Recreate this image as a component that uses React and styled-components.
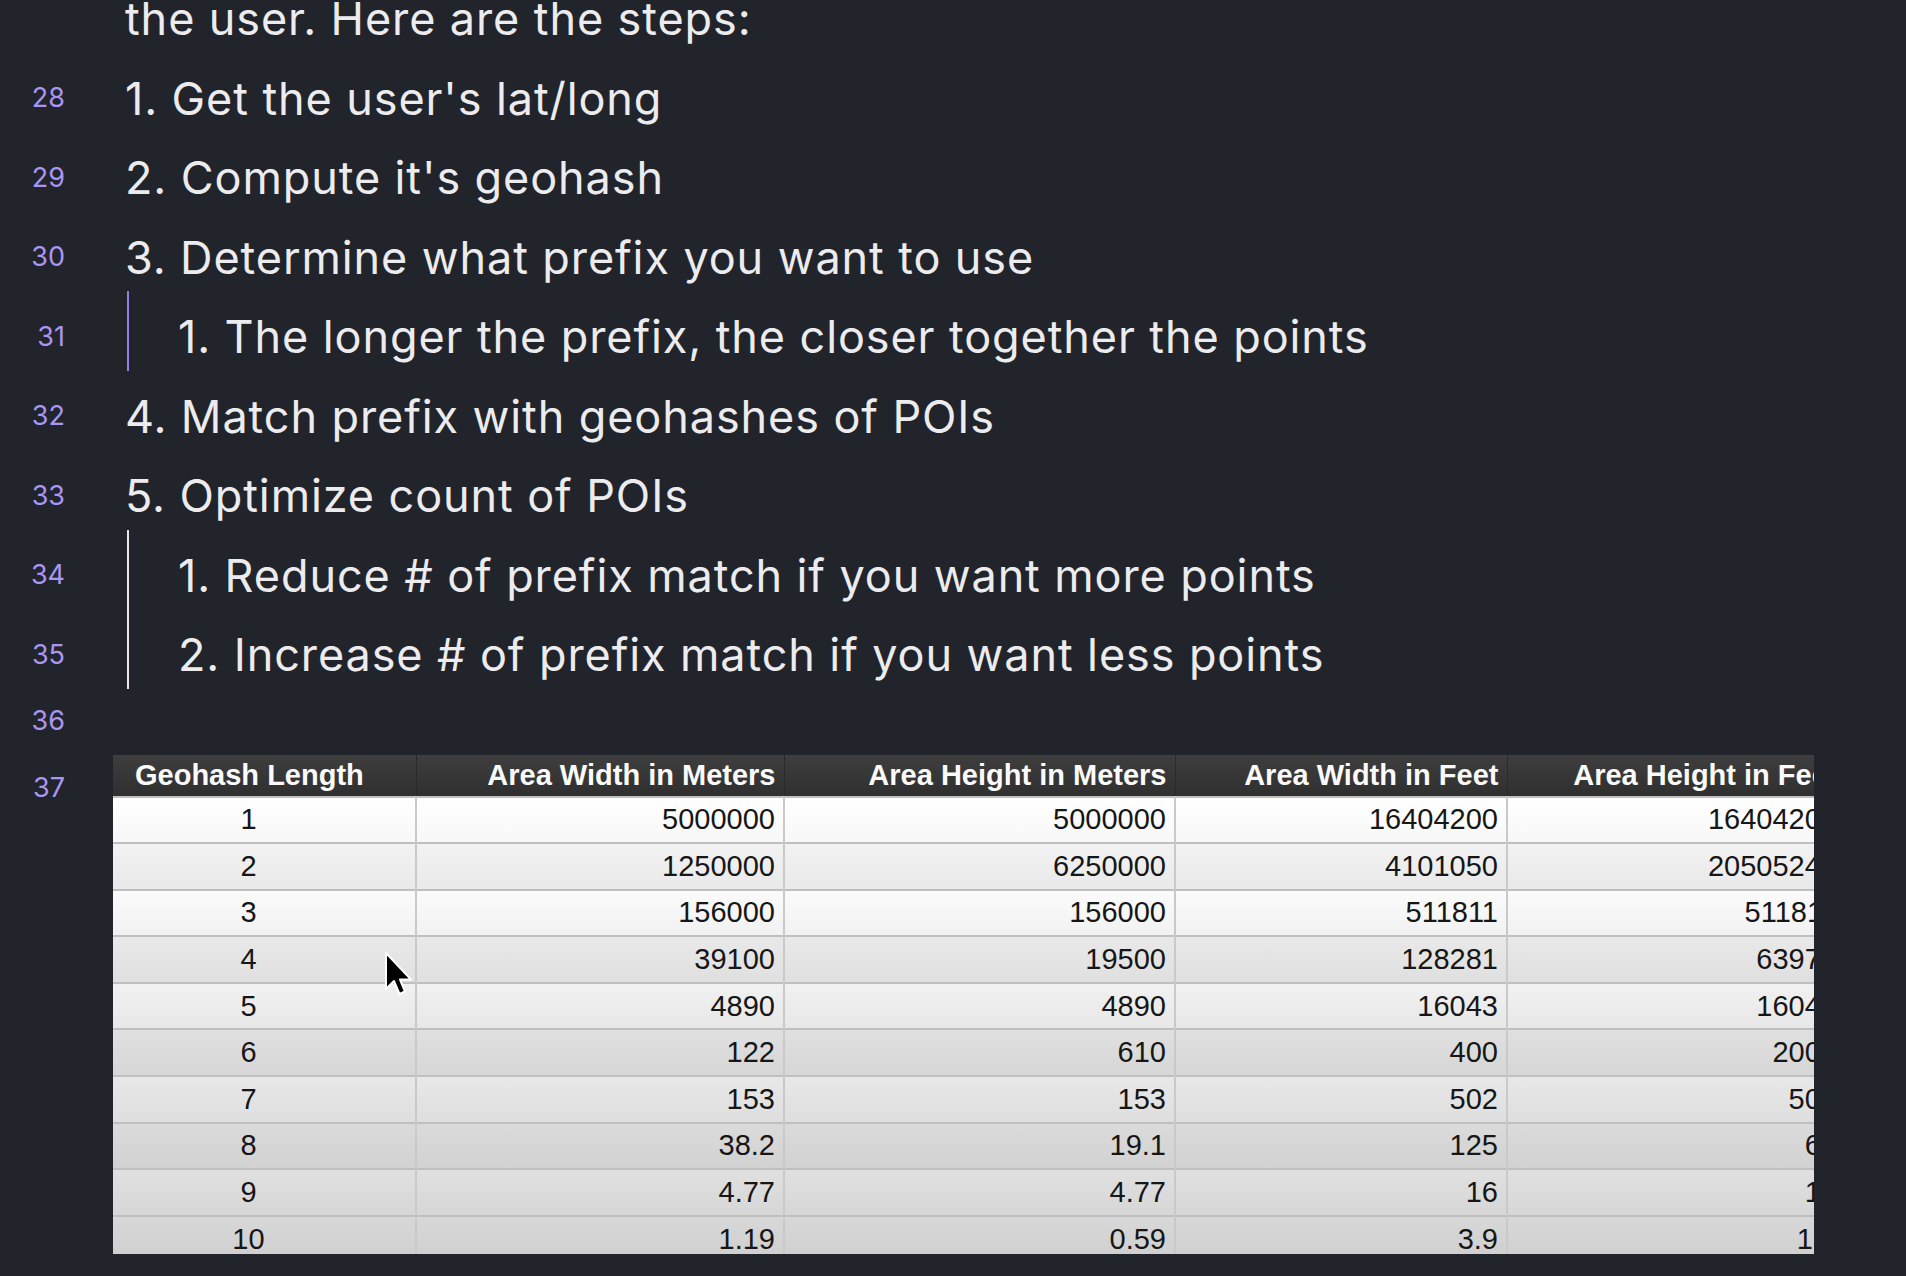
import React from 'react'
import styled, { createGlobalStyle } from 'styled-components'

const GlobalStyle = createGlobalStyle`
  html, body {
    margin: 0;
    padding: 0;
    background: #22242c;
    overflow: hidden;
  }
`

const lines = [
  { n: null, text: 'the user. Here are the steps:' },
  { n: 28, text: "1. Get the user's lat/long" },
  { n: 29, text: "2. Compute it's geohash" },
  { n: 30, text: '3. Determine what prefix you want to use' },
  { n: 31, text: '1. The longer the prefix, the closer together the points', nested: 'active' },
  { n: 32, text: '4. Match prefix with geohashes of POIs' },
  { n: 33, text: '5. Optimize count of POIs' },
  { n: 34, text: '1. Reduce # of prefix match if you want more points', nested: 'plain' },
  { n: 35, text: '2. Increase # of prefix match if you want less points', nested: 'plain' },
]

const headers = [
  'Geohash Length',
  'Area Width in Meters',
  'Area Height in Meters',
  'Area Width in Feet',
  'Area Height in Feet',
]

const rows = [
  ['1', '5000000', '5000000', '16404200', '16404200'],
  ['2', '1250000', '6250000', '4101050', '20505240'],
  ['3', '156000', '156000', '511811', '511811'],
  ['4', '39100', '19500', '128281', '63976'],
  ['5', '4890', '4890', '16043', '16043'],
  ['6', '122', '610', '400', '2001'],
  ['7', '153', '153', '502', '502'],
  ['8', '38.2', '19.1', '125', '63'],
  ['9', '4.77', '4.77', '16', '16'],
  ['10', '1.19', '0.59', '3.9', '1.9'],
]

// row shades taken off the screenshot, top to bottom: [top, bottom]
const shades = [
  ['#ffffff', '#f7f7f7'],
  ['#f2f2f2', '#e9e9e9'],
  ['#fbfbfb', '#f1f1f1'],
  ['#e9e9e9', '#dfdfdf'],
  ['#f1f1f1', '#e7e7e7'],
  ['#e0e0e0', '#d6d6d6'],
  ['#e8e8e8', '#dedede'],
  ['#dbdbdb', '#d1d1d1'],
  ['#e0e0e0', '#d6d6d6'],
  ['#d8d8d8', '#cecece'],
]

const Editor = styled.div`
  margin-top: -21px;
  font-family: Inter, 'Noto Sans', sans-serif;
  color: #ececee;
`

const Line = styled.div`
  display: flex;
  align-items: center;
  height: ${(p) => p.h || 79.5}px;
`

const Gutter = styled.div`
  width: 65px;
  flex: none;
  text-align: right;
  font-size: 27px;
  color: #a996f2;
  align-self: ${(p) => (p.top ? 'flex-start' : 'center')};
  padding-top: ${(p) => (p.top ? 18 : 0)}px;
  line-height: 30px;
`

const Content = styled.div`
  margin-left: 60px;
  display: flex;
  align-items: center;
  height: 100%;
  font-size: 45px;
  letter-spacing: 0.9px;
  white-space: nowrap;
`

const Guide = styled.div`
  width: 2px;
  align-self: stretch;
  margin: -6px 49px 6px 2px;
  background: ${(p) => (p.kind === 'active' ? '#8f7fe6' : '#e6e6e8')};
`

const TableLine = styled.div`
  display: flex;
  padding-top: 8px;
`

const TableClip = styled.div`
  margin-left: 48px;
  width: 1701px;
  height: 499px;
  overflow: hidden;
  position: relative;
`

const Table = styled.table`
  border-collapse: collapse;
  table-layout: fixed;
  width: 1733px;
  font-family: 'Liberation Sans', Arial, sans-serif;
  font-size: 29px;
  color: #161616;
`

const Head = styled.th`
  height: 41px;
  padding: 0 8px 0 ${(p) => (p.left ? 22 : 8)}px;
  background: linear-gradient(#3e3e3e, #2f2f2f);
  color: #fafafa;
  font-weight: 700;
  text-align: ${(p) => (p.left ? 'left' : 'right')};
  border-right: 1px solid #2a2a2a;
  white-space: nowrap;
  overflow: hidden;
`

const Row = styled.tr`
  background: linear-gradient(${(p) => p.top}, ${(p) => p.bottom});
`

const Cell = styled.td`
  height: 44.6px;
  padding: 0 ${(p) => (p.center ? 39 : 8)}px 0 8px;
  text-align: ${(p) => (p.center ? 'center' : 'right')};
  border-top: 2px solid #bfbfbf;
  border-right: 2px solid #c9c9c9;
  white-space: nowrap;
  overflow: hidden;
  line-height: 1;
`

const Cursor = styled.svg`
  position: absolute;
  left: 270px;
  top: 196px;
  width: 30px;
  height: 48px;
`

const widths = [303, 368, 391, 332, 339]

const App = () => (
  <>
    <GlobalStyle />
    <Editor>
      {lines.map((l, i) => (
        <Line key={i}>
          <Gutter>{l.n}</Gutter>
          <Content>
            {l.nested && <Guide kind={l.nested} />}
            {l.text}
          </Content>
        </Line>
      ))}
      <Line h={52}>
        <Gutter>36</Gutter>
      </Line>
      <TableLine>
        <Gutter top>37</Gutter>
        <TableClip>
          <Table>
            <colgroup>
              {widths.map((w, i) => (
                <col key={i} style={{ width: w }} />
              ))}
            </colgroup>
            <thead>
              <tr>
                {headers.map((h, i) => (
                  <Head key={h} left={i === 0}>
                    {h}
                  </Head>
                ))}
              </tr>
            </thead>
            <tbody>
              {rows.map((r, i) => (
                <Row key={i} top={shades[i][0]} bottom={shades[i][1]}>
                  {r.map((v, j) => (
                    <Cell key={j} center={j === 0}>
                      {v}
                    </Cell>
                  ))}
                </Row>
              ))}
            </tbody>
          </Table>
          <Cursor viewBox="0 0 30 48">
            <path
              d="M3 2 L3 38 L11 30 L16.5 43 L22 40.5 L17 28.5 L28 28.5 Z"
              fill="#000"
              stroke="#fff"
              strokeWidth="2"
              strokeLinejoin="round"
            />
          </Cursor>
        </TableClip>
      </TableLine>
    </Editor>
  </>
)

export default App
